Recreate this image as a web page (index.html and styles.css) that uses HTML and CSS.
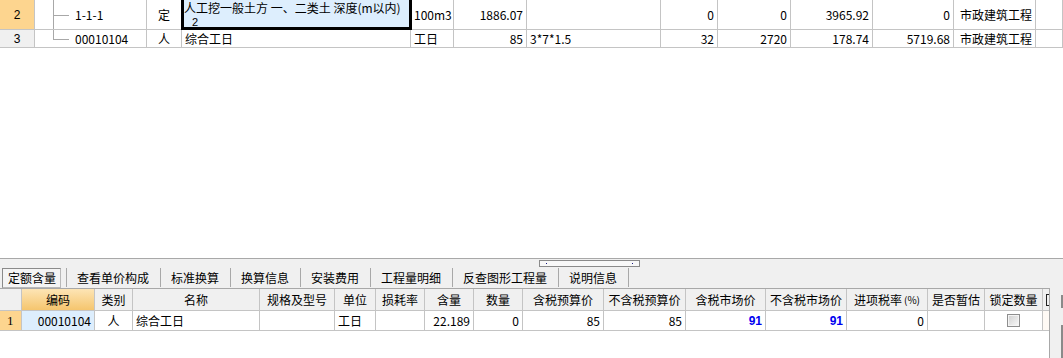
FILE: index.html
```html
<!DOCTYPE html>
<html lang="zh-CN">
<head>
<meta charset="utf-8">
<title>定额含量</title>
<link rel="stylesheet" href="styles.css">
</head>
<body>
<div class="app">
  <div class="upper">
    <div class="ugrid">
      <div class="uc rh sel">2</div>
      <div class="uc code tee">1-1-1</div>
      <div class="uc ctr">定</div>
      <div class="uc name selcell"><span class="l1">人工挖一般土方 一、二类土 深度(m以内)</span><span class="l2">2</span></div>
      <div class="uc">100m3</div>
      <div class="uc num">1886.07</div>
      <div class="uc"></div>
      <div class="uc num">0</div>
      <div class="uc num">0</div>
      <div class="uc num">3965.92</div>
      <div class="uc num">0</div>
      <div class="uc txt">市政建筑工程</div>
      <div class="uc"></div>

      <div class="uc rh">3</div>
      <div class="uc code ell">00010104</div>
      <div class="uc ctr">人</div>
      <div class="uc">综合工日</div>
      <div class="uc">工日</div>
      <div class="uc num">85</div>
      <div class="uc">3*7*1.5</div>
      <div class="uc num">32</div>
      <div class="uc num">2720</div>
      <div class="uc num">178.74</div>
      <div class="uc num">5719.68</div>
      <div class="uc txt">市政建筑工程</div>
      <div class="uc"></div>
    </div>
  </div>

  <div class="lower">
    <div class="splitter"><span class="grip"><i></i><i></i></span></div>
    <div class="tabs">
      <span class="tab active"><span class="box">定额含量</span></span>
      <span class="tab">查看单价构成</span>
      <span class="tab">标准换算</span>
      <span class="tab">换算信息</span>
      <span class="tab">安装费用</span>
      <span class="tab">工程量明细</span>
      <span class="tab">反查图形工程量</span>
      <span class="tab">说明信息</span>
    </div>
    <div class="lbody">
      <div class="lgrid">
        <div class="lc hd"></div>
        <div class="lc hd hot">编码</div>
        <div class="lc hd">类别</div>
        <div class="lc hd">名称</div>
        <div class="lc hd">规格及型号</div>
        <div class="lc hd">单位</div>
        <div class="lc hd">损耗率</div>
        <div class="lc hd">含量</div>
        <div class="lc hd">数量</div>
        <div class="lc hd">含税预算价</div>
        <div class="lc hd">不含税预算价</div>
        <div class="lc hd">含税市场价</div>
        <div class="lc hd">不含税市场价</div>
        <div class="lc hd">进项税率<small>(%)</small></div>
        <div class="lc hd">是否暂估</div>
        <div class="lc hd">锁定数量</div>
        <div class="lc hd clip"><span class="stub"></span></div>

        <div class="lc rnum">1</div>
        <div class="lc num cur">00010104</div>
        <div class="lc ctr">人</div>
        <div class="lc">综合工日</div>
        <div class="lc"></div>
        <div class="lc">工日</div>
        <div class="lc"></div>
        <div class="lc num">22.189</div>
        <div class="lc num">0</div>
        <div class="lc num">85</div>
        <div class="lc num">85</div>
        <div class="lc num blue">91</div>
        <div class="lc num blue">91</div>
        <div class="lc num">0</div>
        <div class="lc"></div>
        <div class="lc ctr"><span class="chk"></span></div>
        <div class="lc last"></div>
      </div>
      <div class="vbar"><i></i><i></i></div>
    </div>
  </div>
</div>
</body>
</html>
```

FILE: styles.css
```css
* { box-sizing: border-box; margin: 0; padding: 0; }
html, body { width: 1063px; height: 358px; overflow: hidden; background: #fff; }
body {
  font-family: "Noto Sans CJK SC", "Liberation Sans", sans-serif;
  font-size: 12px;
  color: #000;
}
.app { display: flex; flex-direction: column; height: 358px; }

/* ---------- upper grid ---------- */
.upper { height: 258px; background: #fff; flex: none; }
.ugrid {
  display: grid;
  grid-template-columns: 35px 112px 35px 229px 43px 73px 134px 57px 73px 82px 81px 82px 27px;
  grid-template-rows: 30px 18px;
}
.uc {
  display: flex;
  align-items: center;
  padding: 0 3px;
  border-right: 1px solid #c4c4c4;
  border-bottom: 1px solid #c4c4c4;
  white-space: nowrap;
  overflow: hidden;
  line-height: 12px;
}
.uc.num { justify-content: flex-end; }
.uc.ctr { justify-content: center; }
.uc.txt { padding-left: 6px; }
.uc.rh {
  justify-content: center;
  background: #f0f0f0;
  font-family: "Liberation Sans", sans-serif;
  font-size: 12px;
}
.uc.rh.sel { background: #fdd58f; }

.code { padding-left: 40px; }
.code.tee {
  background:
    linear-gradient(#a8a8a8, #a8a8a8) 18px 0 / 1px 100% no-repeat,
    linear-gradient(#a8a8a8, #a8a8a8) 18px 15px / 16px 1px no-repeat;
}
.code.ell {
  background:
    linear-gradient(#a8a8a8, #a8a8a8) 18px 0 / 1px 10px no-repeat,
    linear-gradient(#a8a8a8, #a8a8a8) 18px 9px / 16px 1px no-repeat;
}

.name.selcell {
  position: relative;
  overflow: visible;
  background: #ddeefd;
  flex-direction: column;
  align-items: flex-start;
  justify-content: flex-start;
  padding: 0 2px;
}
.name.selcell .l1 { display: block; height: 15px; line-height: 15px; }
.name.selcell .l2 {
  display: block;
  height: 13px;
  margin-top: 1px;
  line-height: 13px;
  padding-left: 8px;
  font-family: "Liberation Sans", sans-serif;
  font-size: 11px;
}
.name.selcell::after {
  content: "";
  position: absolute;
  left: -1px;
  right: -2px;
  top: -3px;
  bottom: -1px;
  border: 3px solid #000;
}

/* ---------- lower panel ---------- */
.lower {
  flex: 1;
  display: flex;
  flex-direction: column;
  background: #f0f0f0;
  border-top: 1px solid #a8a8a8;
}
.splitter { height: 8px; flex: none; }
.grip {
  display: flex;
  justify-content: space-between;
  align-items: center;
  margin: 1px 0 0 539px;
  width: 101px;
  height: 7px;
  padding: 0 6px;
  border: 1px solid #8a8a8a;
  background: #f8f8f8;
}
.grip i { display: block; width: 1px; height: 1px; background: #1a1a80; }

.tabs {
  height: 21px;
  flex: none;
  display: flex;
  align-items: center;
}
.tab {
  display: flex;
  align-items: center;
  height: 19px;
  padding: 0 11px 0 10px;
  border-right: 1px solid #a8a8a8;
  white-space: nowrap;
  line-height: 12px;
}
.tab.active { padding: 0 5px 0 2px; height: 19px; }
.tab .box {
  display: flex;
  align-items: center;
  height: 20px;
  padding: 0 4px 0 5px;
  border: 1px solid #8a8a8a;
  border-right-color: #b8b8b8;
  border-bottom-color: #b8b8b8;
  background: #f4f4f4;
}

.lbody { flex: 1; display: flex; }
.lgrid {
  width: 1050px;
  flex: none;
  background: #fff;
  border-top: 1px solid #a8a8a8;
  border-right: 1px solid #a8a8a8;
  display: grid;
  grid-template-columns: 22px 73px 38px 127px 75px 41px 49px 49px 49px 81px 82px 80px 81px 81px 57px 58px 6px;
  grid-template-rows: 22px 20px;
  align-content: start;
}
.lc {
  display: flex;
  align-items: center;
  padding: 0 3px;
  border-right: 1px solid #c4c4c4;
  border-bottom: 1px solid #c4c4c4;
  white-space: nowrap;
  overflow: hidden;
  line-height: 12px;
}
.lc.hd { justify-content: center; background: #f0f0f0; padding: 0 2px; }
.lc.hd small { font-size: 10px; margin-left: 2px; }
.lc.hd.hot { background: linear-gradient(#fde5b5, #f5c56e); }
.lc.clip { justify-content: flex-start; padding: 0 0 0 3px; border-right: 0; }
.stub {
  display: block;
  width: 3px;
  height: 12px;
  border-left: 1px solid #222;
  border-top: 1px solid #222;
  border-bottom: 1px solid #222;
}
.lc.last { border-right: 0; background: #fffaf5; }
.lc.num { justify-content: flex-end; }
.lc.ctr { justify-content: center; }
.lc.rnum {
  background: #fdd58f;
  font-family: "Liberation Serif", serif;
  font-size: 13px;
  padding-left: 7px;
}
.lc.cur { background: #ddeefd; }
.lc.blue { color: #0000f0; font-weight: bold; font-family: "Liberation Sans", sans-serif; }
.chk {
  display: block;
  width: 13px;
  height: 13px;
  border: 1px solid #8e8e8e;
  box-shadow: inset 0 0 0 1px #f4f4f4;
  background: linear-gradient(135deg, #cfcfcf, #fafafa);
}

.vbar {
  flex: 1;
  display: flex;
  flex-direction: column;
  align-items: flex-end;
  padding-top: 7px;
}
.vbar i { display: block; width: 2px; background: #8a8a8a; }
.vbar i:first-child { height: 13px; margin-bottom: 17px; }
.vbar i:last-child { flex: 1; }
```
